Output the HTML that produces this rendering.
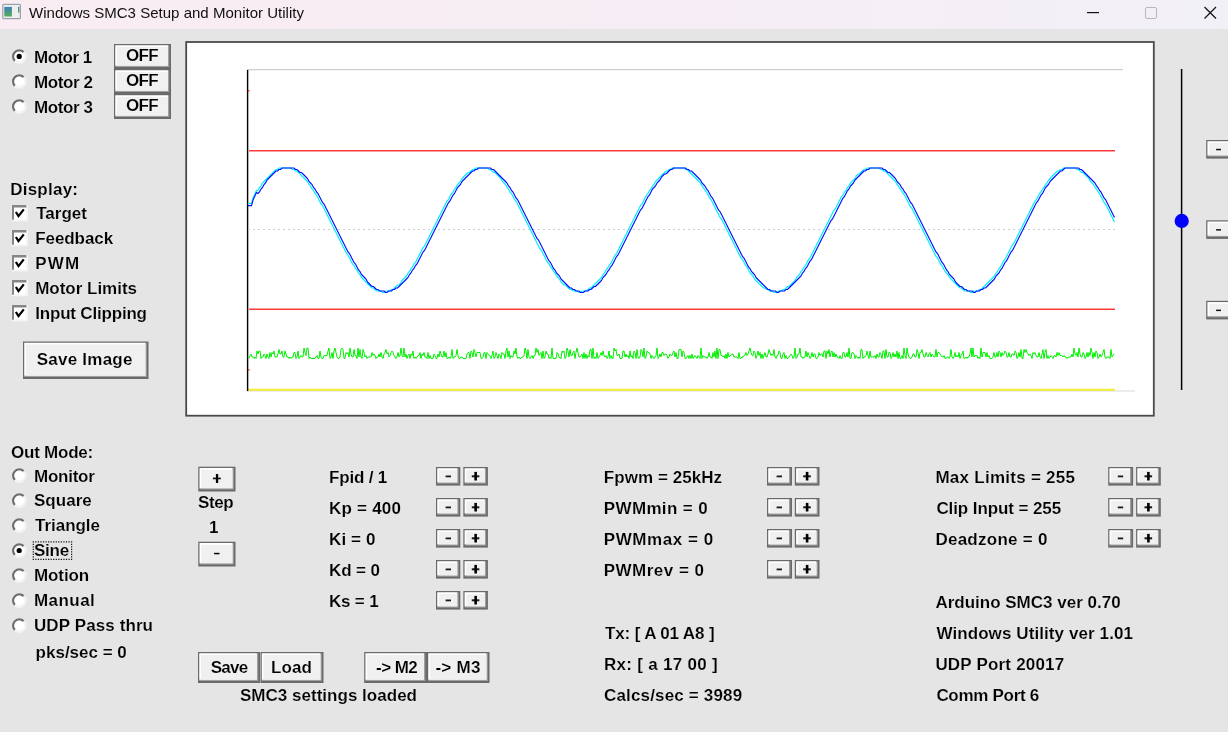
<!DOCTYPE html><html><head><meta charset="utf-8"><style>html,body{margin:0;padding:0;background:#e5e5e5;overflow:hidden}svg{display:block}</style></head><body>
<svg width="1228" height="732" viewBox="0 0 1228 732" font-family="'Liberation Sans', sans-serif">
<rect width="1228" height="732" fill="#e5e5e5"/>
<defs><linearGradient id="tb" x1="0" x2="1" y1="0" y2="0"><stop offset="0" stop-color="#f9edf3"/><stop offset="0.55" stop-color="#f6edf4"/><stop offset="1" stop-color="#f2f0f7"/></linearGradient><filter id="gs" x="0" y="0" width="1228" height="732" filterUnits="userSpaceOnUse"><feColorMatrix type="saturate" values="0"/></filter><linearGradient id="ic" x1="0" x2="0" y1="0" y2="1"><stop offset="0" stop-color="#3f7fb8"/><stop offset="1" stop-color="#4fae5a"/></linearGradient></defs>
<rect x="0" y="0" width="1228" height="29" fill="url(#tb)"/>
<rect x="2.8" y="4.3" width="17.6" height="14.4" rx="1" fill="#eeeeee" stroke="#9aa2ac" stroke-width="1.2"/>
<rect x="4.3" y="6.9" width="7.6" height="9.6" fill="url(#ic)"/>
<rect x="18" y="6.9" width="1.4" height="5.8" fill="url(#ic)"/>
<text x="29" y="18" font-size="15" fill="#111" textLength="275" lengthAdjust="spacingAndGlyphs" filter="url(#gs)">Windows SMC3 Setup and Monitor Utility</text>
<rect x="1087" y="12" width="12" height="1.2" fill="#111"/>
<rect x="1145.5" y="7.5" width="11" height="11" rx="1.5" fill="none" stroke="#b8b8b8" stroke-width="1"/>
<path d="M1204.5 7 L1216 18.5 M1216 7 L1204.5 18.5" stroke="#111" stroke-width="1.2"/>
<rect x="186.2" y="42.0" width="967.6" height="373.7" fill="#ffffff" stroke="#4a4a4a" stroke-width="1.8"/>
<line x1="247" y1="69.7" x2="1123" y2="69.7" stroke="#c4c4c4" stroke-width="1"/>
<line x1="247" y1="391" x2="1135" y2="391" stroke="#d8d8d8" stroke-width="1"/>
<line x1="248" y1="389.8" x2="1115" y2="389.8" stroke="#f4ee30" stroke-width="2"/>
<line x1="247.6" y1="70" x2="247.6" y2="391" stroke="#000" stroke-width="1.4"/>
<line x1="249" y1="150.7" x2="1115" y2="150.7" stroke="#ff3a3a" stroke-width="1.6"/>
<line x1="249" y1="309.2" x2="1115" y2="309.2" stroke="#ff3a3a" stroke-width="1.6"/>
<rect x="248" y="90" width="1.6" height="1.6" fill="#ff3a3a"/>
<rect x="248" y="369" width="1.6" height="1.6" fill="#ff3a3a"/>
<line x1="248" y1="229.5" x2="1115" y2="229.5" stroke="#cfcfcf" stroke-width="1" stroke-dasharray="2,3"/>
<polyline points="248.00,203.43 251.50,203.43 253.00,197.93 256.50,190.43 258.00,190.50 259.50,187.50 261.00,186.00 262.50,183.00 264.00,181.50 265.50,180.00 267.00,178.50 268.50,177.00 270.00,175.50 271.50,174.00 273.00,172.50 274.50,171.00 276.00,169.50 277.50,169.50 279.00,168.00 280.50,168.00 282.00,168.00 283.50,168.00 285.00,168.00 286.50,168.00 288.00,168.00 289.50,168.00 291.00,168.00 292.50,169.50 294.00,169.50 295.50,171.00 297.00,171.00 298.50,172.50 300.00,174.00 301.50,175.50 303.00,177.00 304.50,178.50 306.00,180.00 307.50,181.50 309.00,184.50 310.50,186.00 312.00,189.00 313.50,190.50 315.00,193.50 316.50,195.00 318.00,198.00 319.50,201.00 321.00,204.00 322.50,205.50 324.00,208.50 325.50,211.50 327.00,214.50 328.50,217.50 330.00,220.50 331.50,223.50 333.00,226.50 334.50,229.50 336.00,232.50 337.50,235.50 339.00,238.50 340.50,241.50 342.00,244.50 343.50,247.50 345.00,250.50 346.50,253.50 348.00,255.00 349.50,258.00 351.00,261.00 352.50,264.00 354.00,265.50 355.50,268.50 357.00,270.00 358.50,273.00 360.00,274.50 361.50,277.50 363.00,279.00 364.50,280.50 366.00,282.00 367.50,283.50 369.00,285.00 370.50,286.50 372.00,288.00 373.50,288.00 375.00,289.50 376.50,291.00 378.00,291.00 379.50,291.00 381.00,291.00 382.50,292.50 384.00,292.50 385.50,291.00 387.00,291.00 388.50,291.00 390.00,291.00 391.50,289.50 393.00,289.50 394.50,288.00 396.00,286.50 397.50,285.00 399.00,285.00 400.50,283.50 402.00,280.50 403.50,279.00 405.00,277.50 406.50,276.00 408.00,273.00 409.50,271.50 411.00,268.50 412.50,267.00 414.00,264.00 415.50,262.50 417.00,259.50 418.50,256.50 420.00,253.50 421.50,250.50 423.00,247.50 424.50,246.00 426.00,243.00 427.50,240.00 429.00,237.00 430.50,234.00 432.00,231.00 433.50,228.00 435.00,225.00 436.50,222.00 438.00,219.00 439.50,216.00 441.00,213.00 442.50,210.00 444.00,207.00 445.50,204.00 447.00,201.00 448.50,199.50 450.00,196.50 451.50,193.50 453.00,192.00 454.50,189.00 456.00,187.50 457.50,184.50 459.00,183.00 460.50,181.50 462.00,178.50 463.50,177.00 465.00,175.50 466.50,174.00 468.00,172.50 469.50,172.50 471.00,171.00 472.50,169.50 474.00,169.50 475.50,168.00 477.00,168.00 478.50,168.00 480.00,168.00 481.50,168.00 483.00,168.00 484.50,168.00 486.00,168.00 487.50,168.00 489.00,169.50 490.50,169.50 492.00,171.00 493.50,172.50 495.00,172.50 496.50,174.00 498.00,175.50 499.50,177.00 501.00,178.50 502.50,181.50 504.00,183.00 505.50,184.50 507.00,187.50 508.50,189.00 510.00,192.00 511.50,193.50 513.00,196.50 514.50,199.50 516.00,201.00 517.50,204.00 519.00,207.00 520.50,210.00 522.00,213.00 523.50,216.00 525.00,219.00 526.50,222.00 528.00,225.00 529.50,228.00 531.00,231.00 532.50,234.00 534.00,237.00 535.50,240.00 537.00,243.00 538.50,246.00 540.00,249.00 541.50,250.50 543.00,253.50 544.50,256.50 546.00,259.50 547.50,262.50 549.00,264.00 550.50,267.00 552.00,268.50 553.50,271.50 555.00,273.00 556.50,276.00 558.00,277.50 559.50,279.00 561.00,282.00 562.50,283.50 564.00,285.00 565.50,285.00 567.00,286.50 568.50,288.00 570.00,289.50 571.50,289.50 573.00,291.00 574.50,291.00 576.00,291.00 577.50,291.00 579.00,292.50 580.50,292.50 582.00,291.00 583.50,291.00 585.00,291.00 586.50,291.00 588.00,289.50 589.50,288.00 591.00,288.00 592.50,286.50 594.00,285.00 595.50,283.50 597.00,282.00 598.50,280.50 600.00,279.00 601.50,277.50 603.00,274.50 604.50,273.00 606.00,270.00 607.50,268.50 609.00,265.50 610.50,264.00 612.00,261.00 613.50,258.00 615.00,255.00 616.50,253.50 618.00,250.50 619.50,247.50 621.00,244.50 622.50,241.50 624.00,238.50 625.50,235.50 627.00,232.50 628.50,229.50 630.00,226.50 631.50,223.50 633.00,220.50 634.50,217.50 636.00,214.50 637.50,211.50 639.00,208.50 640.50,205.50 642.00,204.00 643.50,201.00 645.00,198.00 646.50,195.00 648.00,193.50 649.50,190.50 651.00,189.00 652.50,186.00 654.00,184.50 655.50,181.50 657.00,180.00 658.50,178.50 660.00,177.00 661.50,175.50 663.00,174.00 664.50,172.50 666.00,171.00 667.50,171.00 669.00,169.50 670.50,169.50 672.00,168.00 673.50,168.00 675.00,168.00 676.50,168.00 678.00,168.00 679.50,168.00 681.00,168.00 682.50,168.00 684.00,168.00 685.50,169.50 687.00,169.50 688.50,171.00 690.00,172.50 691.50,174.00 693.00,175.50 694.50,177.00 696.00,178.50 697.50,180.00 699.00,181.50 700.50,183.00 702.00,186.00 703.50,187.50 705.00,190.50 706.50,192.00 708.00,195.00 709.50,198.00 711.00,199.50 712.50,202.50 714.00,205.50 715.50,208.50 717.00,211.50 718.50,214.50 720.00,217.50 721.50,219.00 723.00,222.00 724.50,225.00 726.00,228.00 727.50,231.00 729.00,234.00 730.50,237.00 732.00,240.00 733.50,243.00 735.00,246.00 736.50,249.00 738.00,252.00 739.50,255.00 741.00,258.00 742.50,259.50 744.00,262.50 745.50,265.50 747.00,267.00 748.50,270.00 750.00,273.00 751.50,274.50 753.00,276.00 754.50,279.00 756.00,280.50 757.50,282.00 759.00,283.50 760.50,285.00 762.00,286.50 763.50,288.00 765.00,288.00 766.50,289.50 768.00,289.50 769.50,291.00 771.00,291.00 772.50,291.00 774.00,292.50 775.50,292.50 777.00,292.50 778.50,291.00 780.00,291.00 781.50,291.00 783.00,289.50 784.50,289.50 786.00,288.00 787.50,286.50 789.00,286.50 790.50,285.00 792.00,283.50 793.50,282.00 795.00,280.50 796.50,277.50 798.00,276.00 799.50,274.50 801.00,271.50 802.50,270.00 804.00,267.00 805.50,265.50 807.00,262.50 808.50,259.50 810.00,258.00 811.50,255.00 813.00,252.00 814.50,249.00 816.00,246.00 817.50,243.00 819.00,240.00 820.50,237.00 822.00,234.00 823.50,231.00 825.00,228.00 826.50,225.00 828.00,222.00 829.50,219.00 831.00,216.00 832.50,213.00 834.00,210.00 835.50,208.50 837.00,205.50 838.50,202.50 840.00,199.50 841.50,196.50 843.00,195.00 844.50,192.00 846.00,190.50 847.50,187.50 849.00,186.00 850.50,183.00 852.00,181.50 853.50,180.00 855.00,178.50 856.50,175.50 858.00,174.00 859.50,174.00 861.00,172.50 862.50,171.00 864.00,169.50 865.50,169.50 867.00,168.00 868.50,168.00 870.00,168.00 871.50,168.00 873.00,168.00 874.50,168.00 876.00,168.00 877.50,168.00 879.00,168.00 880.50,169.50 882.00,169.50 883.50,171.00 885.00,171.00 886.50,172.50 888.00,174.00 889.50,175.50 891.00,177.00 892.50,178.50 894.00,180.00 895.50,181.50 897.00,184.50 898.50,186.00 900.00,189.00 901.50,190.50 903.00,193.50 904.50,195.00 906.00,198.00 907.50,201.00 909.00,204.00 910.50,207.00 912.00,208.50 913.50,211.50 915.00,214.50 916.50,217.50 918.00,220.50 919.50,223.50 921.00,226.50 922.50,229.50 924.00,232.50 925.50,235.50 927.00,238.50 928.50,241.50 930.00,244.50 931.50,247.50 933.00,250.50 934.50,253.50 936.00,256.50 937.50,258.00 939.00,261.00 940.50,264.00 942.00,265.50 943.50,268.50 945.00,271.50 946.50,273.00 948.00,274.50 949.50,277.50 951.00,279.00 952.50,280.50 954.00,282.00 955.50,283.50 957.00,285.00 958.50,286.50 960.00,288.00 961.50,288.00 963.00,289.50 964.50,291.00 966.00,291.00 967.50,291.00 969.00,291.00 970.50,292.50 972.00,292.50 973.50,291.00 975.00,291.00 976.50,291.00 978.00,291.00 979.50,289.50 981.00,289.50 982.50,288.00 984.00,286.50 985.50,285.00 987.00,283.50 988.50,282.00 990.00,280.50 991.50,279.00 993.00,277.50 994.50,276.00 996.00,273.00 997.50,271.50 999.00,268.50 1000.50,267.00 1002.00,264.00 1003.50,261.00 1005.00,259.50 1006.50,256.50 1008.00,253.50 1009.50,250.50 1011.00,247.50 1012.50,244.50 1014.00,243.00 1015.50,240.00 1017.00,237.00 1018.50,234.00 1020.00,231.00 1021.50,228.00 1023.00,225.00 1024.50,222.00 1026.00,219.00 1027.50,216.00 1029.00,213.00 1030.50,210.00 1032.00,207.00 1033.50,204.00 1035.00,201.00 1036.50,199.50 1038.00,196.50 1039.50,193.50 1041.00,192.00 1042.50,189.00 1044.00,187.50 1045.50,184.50 1047.00,183.00 1048.50,180.00 1050.00,178.50 1051.50,177.00 1053.00,175.50 1054.50,174.00 1056.00,172.50 1057.50,171.00 1059.00,171.00 1060.50,169.50 1062.00,169.50 1063.50,168.00 1065.00,168.00 1066.50,168.00 1068.00,168.00 1069.50,168.00 1071.00,168.00 1072.50,168.00 1074.00,168.00 1075.50,168.00 1077.00,169.50 1078.50,169.50 1080.00,171.00 1081.50,172.50 1083.00,172.50 1084.50,174.00 1086.00,175.50 1087.50,177.00 1089.00,178.50 1090.50,181.50 1092.00,183.00 1093.50,184.50 1095.00,187.50 1096.50,189.00 1098.00,192.00 1099.50,193.50 1101.00,196.50 1102.50,199.50 1104.00,202.50 1105.50,204.00 1107.00,207.00 1108.50,210.00 1110.00,213.00 1111.50,216.00 1113.00,219.00 1114.50,222.00" fill="none" stroke="#00f0ff" stroke-width="1.2"/>
<polyline points="248.00,205.59 251.50,205.59 253.00,200.09 256.50,192.59 258.00,193.50 259.50,192.00 261.00,189.00 262.50,187.50 264.00,184.50 265.50,183.00 267.00,180.00 268.50,178.50 270.00,177.00 271.50,175.50 273.00,174.00 274.50,172.50 276.00,171.00 277.50,171.00 279.00,169.50 280.50,169.50 282.00,168.00 283.50,168.00 285.00,168.00 286.50,168.00 288.00,168.00 289.50,168.00 291.00,168.00 292.50,168.00 294.00,168.00 295.50,169.50 297.00,169.50 298.50,171.00 300.00,172.50 301.50,172.50 303.00,174.00 304.50,175.50 306.00,177.00 307.50,178.50 309.00,181.50 310.50,183.00 312.00,184.50 313.50,187.50 315.00,189.00 316.50,192.00 318.00,193.50 319.50,196.50 321.00,199.50 322.50,202.50 324.00,204.00 325.50,207.00 327.00,210.00 328.50,213.00 330.00,216.00 331.50,219.00 333.00,222.00 334.50,225.00 336.00,228.00 337.50,231.00 339.00,234.00 340.50,237.00 342.00,240.00 343.50,243.00 345.00,246.00 346.50,249.00 348.00,252.00 349.50,253.50 351.00,256.50 352.50,259.50 354.00,262.50 355.50,264.00 357.00,267.00 358.50,270.00 360.00,271.50 361.50,274.50 363.00,276.00 364.50,277.50 366.00,279.00 367.50,282.00 369.00,283.50 370.50,285.00 372.00,286.50 373.50,286.50 375.00,288.00 376.50,289.50 378.00,289.50 379.50,291.00 381.00,291.00 382.50,291.00 384.00,291.00 385.50,292.50 387.00,292.50 388.50,291.00 390.00,291.00 391.50,291.00 393.00,289.50 394.50,289.50 396.00,288.00 397.50,288.00 399.00,286.50 400.50,285.00 402.00,283.50 403.50,282.00 405.00,280.50 406.50,279.00 408.00,277.50 409.50,274.50 411.00,273.00 412.50,270.00 414.00,268.50 415.50,265.50 417.00,264.00 418.50,261.00 420.00,258.00 421.50,255.00 423.00,252.00 424.50,250.50 426.00,247.50 427.50,244.50 429.00,241.50 430.50,238.50 432.00,235.50 433.50,232.50 435.00,229.50 436.50,226.50 438.00,223.50 439.50,220.50 441.00,217.50 442.50,214.50 444.00,211.50 445.50,208.50 447.00,205.50 448.50,202.50 450.00,201.00 451.50,198.00 453.00,195.00 454.50,193.50 456.00,190.50 457.50,187.50 459.00,186.00 460.50,184.50 462.00,181.50 463.50,180.00 465.00,178.50 466.50,177.00 468.00,175.50 469.50,174.00 471.00,172.50 472.50,171.00 474.00,171.00 475.50,169.50 477.00,169.50 478.50,168.00 480.00,168.00 481.50,168.00 483.00,168.00 484.50,168.00 486.00,168.00 487.50,168.00 489.00,168.00 490.50,168.00 492.00,169.50 493.50,169.50 495.00,171.00 496.50,172.50 498.00,174.00 499.50,175.50 501.00,177.00 502.50,178.50 504.00,180.00 505.50,181.50 507.00,183.00 508.50,186.00 510.00,187.50 511.50,190.50 513.00,192.00 514.50,195.00 516.00,198.00 517.50,199.50 519.00,202.50 520.50,205.50 522.00,208.50 523.50,211.50 525.00,214.50 526.50,217.50 528.00,220.50 529.50,223.50 531.00,226.50 532.50,229.50 534.00,232.50 535.50,235.50 537.00,238.50 538.50,240.00 540.00,243.00 541.50,246.00 543.00,249.00 544.50,252.00 546.00,255.00 547.50,258.00 549.00,261.00 550.50,262.50 552.00,265.50 553.50,268.50 555.00,270.00 556.50,273.00 558.00,274.50 559.50,276.00 561.00,279.00 562.50,280.50 564.00,282.00 565.50,283.50 567.00,285.00 568.50,286.50 570.00,288.00 571.50,288.00 573.00,289.50 574.50,289.50 576.00,291.00 577.50,291.00 579.00,291.00 580.50,292.50 582.00,292.50 583.50,292.50 585.00,291.00 586.50,291.00 588.00,291.00 589.50,289.50 591.00,289.50 592.50,288.00 594.00,286.50 595.50,286.50 597.00,285.00 598.50,283.50 600.00,282.00 601.50,280.50 603.00,277.50 604.50,276.00 606.00,274.50 607.50,271.50 609.00,270.00 610.50,267.00 612.00,265.50 613.50,262.50 615.00,259.50 616.50,256.50 618.00,255.00 619.50,252.00 621.00,249.00 622.50,246.00 624.00,243.00 625.50,240.00 627.00,237.00 628.50,234.00 630.00,231.00 631.50,228.00 633.00,225.00 634.50,222.00 636.00,219.00 637.50,216.00 639.00,213.00 640.50,210.00 642.00,208.50 643.50,205.50 645.00,202.50 646.50,199.50 648.00,196.50 649.50,195.00 651.00,192.00 652.50,189.00 654.00,187.50 655.50,186.00 657.00,183.00 658.50,181.50 660.00,180.00 661.50,177.00 663.00,175.50 664.50,174.00 666.00,174.00 667.50,172.50 669.00,171.00 670.50,169.50 672.00,169.50 673.50,168.00 675.00,168.00 676.50,168.00 678.00,168.00 679.50,168.00 681.00,168.00 682.50,168.00 684.00,168.00 685.50,168.00 687.00,169.50 688.50,169.50 690.00,171.00 691.50,171.00 693.00,172.50 694.50,174.00 696.00,175.50 697.50,177.00 699.00,178.50 700.50,180.00 702.00,183.00 703.50,184.50 705.00,186.00 706.50,189.00 708.00,190.50 709.50,193.50 711.00,196.50 712.50,198.00 714.00,201.00 715.50,204.00 717.00,207.00 718.50,210.00 720.00,211.50 721.50,214.50 723.00,217.50 724.50,220.50 726.00,223.50 727.50,226.50 729.00,229.50 730.50,232.50 732.00,235.50 733.50,238.50 735.00,241.50 736.50,244.50 738.00,247.50 739.50,250.50 741.00,253.50 742.50,256.50 744.00,258.00 745.50,261.00 747.00,264.00 748.50,267.00 750.00,268.50 751.50,271.50 753.00,273.00 754.50,274.50 756.00,277.50 757.50,279.00 759.00,280.50 760.50,282.00 762.00,283.50 763.50,285.00 765.00,286.50 766.50,288.00 768.00,289.50 769.50,289.50 771.00,291.00 772.50,291.00 774.00,291.00 775.50,291.00 777.00,292.50 778.50,292.50 780.00,291.00 781.50,291.00 783.00,291.00 784.50,291.00 786.00,289.50 787.50,289.50 789.00,288.00 790.50,286.50 792.00,285.00 793.50,283.50 795.00,282.00 796.50,280.50 798.00,279.00 799.50,277.50 801.00,276.00 802.50,273.00 804.00,271.50 805.50,268.50 807.00,267.00 808.50,264.00 810.00,261.00 811.50,259.50 813.00,256.50 814.50,253.50 816.00,250.50 817.50,247.50 819.00,244.50 820.50,241.50 822.00,238.50 823.50,235.50 825.00,232.50 826.50,229.50 828.00,226.50 829.50,223.50 831.00,220.50 832.50,219.00 834.00,216.00 835.50,213.00 837.00,210.00 838.50,207.00 840.00,204.00 841.50,201.00 843.00,198.00 844.50,196.50 846.00,193.50 847.50,190.50 849.00,189.00 850.50,186.00 852.00,184.50 853.50,183.00 855.00,180.00 856.50,178.50 858.00,177.00 859.50,175.50 861.00,174.00 862.50,172.50 864.00,171.00 865.50,171.00 867.00,169.50 868.50,169.50 870.00,168.00 871.50,168.00 873.00,168.00 874.50,168.00 876.00,168.00 877.50,168.00 879.00,168.00 880.50,168.00 882.00,168.00 883.50,169.50 885.00,169.50 886.50,171.00 888.00,172.50 889.50,172.50 891.00,174.00 892.50,175.50 894.00,177.00 895.50,178.50 897.00,181.50 898.50,183.00 900.00,184.50 901.50,187.50 903.00,189.00 904.50,192.00 906.00,193.50 907.50,196.50 909.00,199.50 910.50,202.50 912.00,204.00 913.50,207.00 915.00,210.00 916.50,213.00 918.00,216.00 919.50,219.00 921.00,222.00 922.50,225.00 924.00,228.00 925.50,231.00 927.00,234.00 928.50,237.00 930.00,240.00 931.50,243.00 933.00,246.00 934.50,249.00 936.00,252.00 937.50,253.50 939.00,256.50 940.50,259.50 942.00,262.50 943.50,264.00 945.00,267.00 946.50,270.00 948.00,271.50 949.50,274.50 951.00,276.00 952.50,277.50 954.00,279.00 955.50,282.00 957.00,283.50 958.50,285.00 960.00,286.50 961.50,286.50 963.00,288.00 964.50,289.50 966.00,289.50 967.50,291.00 969.00,291.00 970.50,291.00 972.00,291.00 973.50,292.50 975.00,292.50 976.50,291.00 978.00,291.00 979.50,291.00 981.00,289.50 982.50,289.50 984.00,288.00 985.50,288.00 987.00,286.50 988.50,285.00 990.00,283.50 991.50,282.00 993.00,280.50 994.50,279.00 996.00,276.00 997.50,274.50 999.00,273.00 1000.50,270.00 1002.00,268.50 1003.50,265.50 1005.00,262.50 1006.50,261.00 1008.00,258.00 1009.50,255.00 1011.00,252.00 1012.50,250.50 1014.00,247.50 1015.50,244.50 1017.00,241.50 1018.50,238.50 1020.00,235.50 1021.50,232.50 1023.00,229.50 1024.50,226.50 1026.00,223.50 1027.50,220.50 1029.00,217.50 1030.50,214.50 1032.00,211.50 1033.50,208.50 1035.00,205.50 1036.50,202.50 1038.00,201.00 1039.50,198.00 1041.00,195.00 1042.50,193.50 1044.00,190.50 1045.50,187.50 1047.00,186.00 1048.50,184.50 1050.00,181.50 1051.50,180.00 1053.00,178.50 1054.50,177.00 1056.00,175.50 1057.50,174.00 1059.00,172.50 1060.50,171.00 1062.00,171.00 1063.50,169.50 1065.00,168.00 1066.50,168.00 1068.00,168.00 1069.50,168.00 1071.00,168.00 1072.50,168.00 1074.00,168.00 1075.50,168.00 1077.00,168.00 1078.50,168.00 1080.00,169.50 1081.50,169.50 1083.00,171.00 1084.50,172.50 1086.00,174.00 1087.50,175.50 1089.00,177.00 1090.50,178.50 1092.00,180.00 1093.50,181.50 1095.00,183.00 1096.50,186.00 1098.00,187.50 1099.50,190.50 1101.00,192.00 1102.50,195.00 1104.00,198.00 1105.50,199.50 1107.00,202.50 1108.50,205.50 1110.00,208.50 1111.50,211.50 1113.00,214.50 1114.50,217.50" fill="none" stroke="#0010ff" stroke-width="1.15"/>
<polyline points="249.0,358.5 250.0,355.5 251.0,354.0 252.0,357.0 253.0,357.0 254.0,358.5 255.0,357.0 256.0,358.5 257.0,351.0 258.0,354.0 259.0,351.0 260.0,351.0 261.0,358.5 262.0,357.0 263.0,357.0 264.0,354.0 265.0,355.5 266.0,358.5 267.0,354.0 268.0,357.0 269.0,358.5 270.0,352.5 271.0,357.0 272.0,352.5 273.0,354.0 274.0,351.0 275.0,357.0 276.0,357.0 277.0,357.0 278.0,354.0 279.0,349.5 280.0,354.0 281.0,354.0 282.0,351.0 283.0,357.0 284.0,357.0 285.0,351.0 286.0,354.0 287.0,357.0 288.0,357.0 289.0,358.5 290.0,357.0 291.0,358.5 292.0,357.0 293.0,357.0 294.0,352.5 295.0,352.5 296.0,358.5 297.0,357.0 298.0,351.0 299.0,358.5 300.0,357.0 301.0,355.5 302.0,357.0 303.0,357.0 304.0,348.0 305.0,352.5 306.0,355.5 307.0,348.0 308.0,348.0 309.0,358.5 310.0,357.0 311.0,358.5 312.0,358.5 313.0,358.5 314.0,358.5 315.0,358.5 316.0,357.0 317.0,355.5 318.0,358.5 319.0,358.5 320.0,351.0 321.0,357.0 322.0,358.5 323.0,358.5 324.0,355.5 325.0,355.5 326.0,355.5 327.0,355.5 328.0,351.0 329.0,348.0 330.0,358.5 331.0,357.0 332.0,352.5 333.0,358.5 334.0,351.0 335.0,348.0 336.0,352.5 337.0,357.0 338.0,358.5 339.0,358.5 340.0,357.0 341.0,349.5 342.0,348.0 343.0,349.5 344.0,358.5 345.0,358.5 346.0,352.5 347.0,354.0 348.0,352.5 349.0,357.0 350.0,348.0 351.0,354.0 352.0,357.0 353.0,357.0 354.0,349.5 355.0,355.5 356.0,355.5 357.0,358.5 358.0,348.0 359.0,357.0 360.0,349.5 361.0,357.0 362.0,358.5 363.0,349.5 364.0,352.5 365.0,357.0 366.0,355.5 367.0,358.5 368.0,357.0 369.0,357.0 370.0,357.0 371.0,357.0 372.0,352.5 373.0,355.5 374.0,354.0 375.0,355.5 376.0,358.5 377.0,357.0 378.0,357.0 379.0,354.0 380.0,357.0 381.0,352.5 382.0,357.0 383.0,358.5 384.0,354.0 385.0,352.5 386.0,349.5 387.0,354.0 388.0,352.5 389.0,357.0 390.0,355.5 391.0,352.5 392.0,351.0 393.0,352.5 394.0,355.5 395.0,357.0 396.0,358.5 397.0,357.0 398.0,352.5 399.0,357.0 400.0,355.5 401.0,348.0 402.0,355.5 403.0,357.0 404.0,348.0 405.0,357.0 406.0,354.0 407.0,358.5 408.0,355.5 409.0,354.0 410.0,358.5 411.0,354.0 412.0,355.5 413.0,351.0 414.0,358.5 415.0,357.0 416.0,358.5 417.0,357.0 418.0,355.5 419.0,355.5 420.0,352.5 421.0,358.5 422.0,354.0 423.0,355.5 424.0,352.5 425.0,357.0 426.0,357.0 427.0,358.5 428.0,352.5 429.0,358.5 430.0,355.5 431.0,358.5 432.0,358.5 433.0,358.5 434.0,354.0 435.0,355.5 436.0,358.5 437.0,358.5 438.0,354.0 439.0,357.0 440.0,351.0 441.0,354.0 442.0,357.0 443.0,357.0 444.0,351.0 445.0,357.0 446.0,352.5 447.0,358.5 448.0,358.5 449.0,357.0 450.0,358.5 451.0,357.0 452.0,349.5 453.0,358.5 454.0,357.0 455.0,357.0 456.0,355.5 457.0,349.5 458.0,355.5 459.0,358.5 460.0,358.5 461.0,357.0 462.0,357.0 463.0,358.5 464.0,358.5 465.0,358.5 466.0,358.5 467.0,354.0 468.0,352.5 469.0,352.5 470.0,358.5 471.0,351.0 472.0,352.5 473.0,357.0 474.0,349.5 475.0,352.5 476.0,357.0 477.0,352.5 478.0,352.5 479.0,352.5 480.0,352.5 481.0,358.5 482.0,358.5 483.0,357.0 484.0,352.5 485.0,352.5 486.0,358.5 487.0,352.5 488.0,354.0 489.0,355.5 490.0,355.5 491.0,358.5 492.0,355.5 493.0,351.0 494.0,358.5 495.0,357.0 496.0,352.5 497.0,355.5 498.0,358.5 499.0,354.0 500.0,355.5 501.0,358.5 502.0,352.5 503.0,354.0 504.0,354.0 505.0,358.5 506.0,351.0 507.0,348.0 508.0,357.0 509.0,351.0 510.0,358.5 511.0,355.5 512.0,357.0 513.0,357.0 514.0,351.0 515.0,354.0 516.0,348.0 517.0,357.0 518.0,358.5 519.0,357.0 520.0,358.5 521.0,358.5 522.0,357.0 523.0,357.0 524.0,355.5 525.0,348.0 526.0,351.0 527.0,358.5 528.0,349.5 529.0,357.0 530.0,358.5 531.0,357.0 532.0,355.5 533.0,358.5 534.0,355.5 535.0,355.5 536.0,348.0 537.0,352.5 538.0,349.5 539.0,355.5 540.0,354.0 541.0,352.5 542.0,358.5 543.0,351.0 544.0,358.5 545.0,357.0 546.0,351.0 547.0,354.0 548.0,354.0 549.0,358.5 550.0,357.0 551.0,358.5 552.0,348.0 553.0,358.5 554.0,358.5 555.0,358.5 556.0,358.5 557.0,352.5 558.0,354.0 559.0,357.0 560.0,358.5 561.0,358.5 562.0,351.0 563.0,352.5 564.0,351.0 565.0,358.5 566.0,357.0 567.0,348.0 568.0,351.0 569.0,357.0 570.0,349.5 571.0,355.5 572.0,355.5 573.0,352.5 574.0,351.0 575.0,358.5 576.0,352.5 577.0,348.0 578.0,352.5 579.0,357.0 580.0,357.0 581.0,355.5 582.0,354.0 583.0,358.5 584.0,352.5 585.0,358.5 586.0,354.0 587.0,358.5 588.0,355.5 589.0,357.0 590.0,349.5 591.0,349.5 592.0,358.5 593.0,348.0 594.0,358.5 595.0,357.0 596.0,358.5 597.0,352.5 598.0,358.5 599.0,357.0 600.0,355.5 601.0,352.5 602.0,355.5 603.0,351.0 604.0,355.5 605.0,357.0 606.0,355.5 607.0,358.5 608.0,357.0 609.0,351.0 610.0,358.5 611.0,355.5 612.0,358.5 613.0,358.5 614.0,348.0 615.0,351.0 616.0,349.5 617.0,355.5 618.0,355.5 619.0,354.0 620.0,358.5 621.0,358.5 622.0,358.5 623.0,351.0 624.0,351.0 625.0,357.0 626.0,354.0 627.0,357.0 628.0,355.5 629.0,358.5 630.0,351.0 631.0,357.0 632.0,355.5 633.0,358.5 634.0,351.0 635.0,352.5 636.0,358.5 637.0,349.5 638.0,357.0 639.0,358.5 640.0,357.0 641.0,349.5 642.0,351.0 643.0,357.0 644.0,348.0 645.0,358.5 646.0,357.0 647.0,351.0 648.0,352.5 649.0,352.5 650.0,354.0 651.0,358.5 652.0,355.5 653.0,357.0 654.0,358.5 655.0,357.0 656.0,355.5 657.0,348.0 658.0,358.5 659.0,357.0 660.0,354.0 661.0,357.0 662.0,352.5 663.0,352.5 664.0,355.5 665.0,354.0 666.0,354.0 667.0,355.5 668.0,358.5 669.0,357.0 670.0,354.0 671.0,355.5 672.0,355.5 673.0,352.5 674.0,351.0 675.0,357.0 676.0,352.5 677.0,358.5 678.0,358.5 679.0,349.5 680.0,349.5 681.0,349.5 682.0,357.0 683.0,351.0 684.0,352.5 685.0,358.5 686.0,358.5 687.0,357.0 688.0,355.5 689.0,358.5 690.0,355.5 691.0,358.5 692.0,354.0 693.0,358.5 694.0,357.0 695.0,355.5 696.0,357.0 697.0,358.5 698.0,355.5 699.0,357.0 700.0,358.5 701.0,348.0 702.0,358.5 703.0,355.5 704.0,357.0 705.0,357.0 706.0,357.0 707.0,358.5 708.0,357.0 709.0,352.5 710.0,357.0 711.0,357.0 712.0,358.5 713.0,352.5 714.0,357.0 715.0,351.0 716.0,358.5 717.0,348.0 718.0,358.5 719.0,349.5 720.0,349.5 721.0,355.5 722.0,355.5 723.0,357.0 724.0,355.5 725.0,358.5 726.0,354.0 727.0,358.5 728.0,352.5 729.0,357.0 730.0,355.5 731.0,355.5 732.0,354.0 733.0,354.0 734.0,357.0 735.0,357.0 736.0,357.0 737.0,357.0 738.0,358.5 739.0,352.5 740.0,358.5 741.0,358.5 742.0,357.0 743.0,357.0 744.0,355.5 745.0,355.5 746.0,352.5 747.0,355.5 748.0,354.0 749.0,351.0 750.0,348.0 751.0,352.5 752.0,355.5 753.0,355.5 754.0,351.0 755.0,352.5 756.0,358.5 757.0,355.5 758.0,351.0 759.0,355.5 760.0,352.5 761.0,358.5 762.0,354.0 763.0,358.5 764.0,355.5 765.0,352.5 766.0,357.0 767.0,357.0 768.0,354.0 769.0,349.5 770.0,352.5 771.0,355.5 772.0,354.0 773.0,355.5 774.0,349.5 775.0,357.0 776.0,358.5 777.0,355.5 778.0,355.5 779.0,351.0 780.0,352.5 781.0,358.5 782.0,358.5 783.0,354.0 784.0,352.5 785.0,358.5 786.0,355.5 787.0,358.5 788.0,358.5 789.0,357.0 790.0,355.5 791.0,354.0 792.0,355.5 793.0,358.5 794.0,357.0 795.0,348.0 796.0,358.5 797.0,357.0 798.0,354.0 799.0,354.0 800.0,348.0 801.0,357.0 802.0,357.0 803.0,358.5 804.0,357.0 805.0,357.0 806.0,351.0 807.0,357.0 808.0,352.5 809.0,355.5 810.0,358.5 811.0,357.0 812.0,352.5 813.0,357.0 814.0,354.0 815.0,354.0 816.0,358.5 817.0,358.5 818.0,357.0 819.0,352.5 820.0,355.5 821.0,354.0 822.0,354.0 823.0,357.0 824.0,351.0 825.0,351.0 826.0,358.5 827.0,351.0 828.0,354.0 829.0,349.5 830.0,357.0 831.0,352.5 832.0,351.0 833.0,357.0 834.0,352.5 835.0,357.0 836.0,354.0 837.0,357.0 838.0,357.0 839.0,358.5 840.0,355.5 841.0,358.5 842.0,358.5 843.0,352.5 844.0,352.5 845.0,357.0 846.0,357.0 847.0,352.5 848.0,357.0 849.0,348.0 850.0,358.5 851.0,358.5 852.0,352.5 853.0,352.5 854.0,354.0 855.0,358.5 856.0,355.5 857.0,357.0 858.0,358.5 859.0,357.0 860.0,358.5 861.0,349.5 862.0,349.5 863.0,358.5 864.0,357.0 865.0,357.0 866.0,355.5 867.0,351.0 868.0,355.5 869.0,358.5 870.0,351.0 871.0,357.0 872.0,357.0 873.0,357.0 874.0,357.0 875.0,355.5 876.0,358.5 877.0,354.0 878.0,357.0 879.0,357.0 880.0,352.5 881.0,354.0 882.0,358.5 883.0,351.0 884.0,351.0 885.0,358.5 886.0,349.5 887.0,357.0 888.0,357.0 889.0,352.5 890.0,352.5 891.0,358.5 892.0,357.0 893.0,352.5 894.0,357.0 895.0,354.0 896.0,357.0 897.0,351.0 898.0,358.5 899.0,352.5 900.0,358.5 901.0,358.5 902.0,355.5 903.0,358.5 904.0,348.0 905.0,355.5 906.0,358.5 907.0,348.0 908.0,354.0 909.0,357.0 910.0,358.5 911.0,358.5 912.0,357.0 913.0,354.0 914.0,354.0 915.0,357.0 916.0,357.0 917.0,349.5 918.0,352.5 919.0,358.5 920.0,352.5 921.0,352.5 922.0,349.5 923.0,354.0 924.0,357.0 925.0,357.0 926.0,352.5 927.0,355.5 928.0,357.0 929.0,354.0 930.0,352.5 931.0,357.0 932.0,354.0 933.0,355.5 934.0,357.0 935.0,357.0 936.0,349.5 937.0,357.0 938.0,352.5 939.0,352.5 940.0,354.0 941.0,355.5 942.0,357.0 943.0,357.0 944.0,355.5 945.0,358.5 946.0,358.5 947.0,357.0 948.0,357.0 949.0,358.5 950.0,357.0 951.0,349.5 952.0,357.0 953.0,358.5 954.0,357.0 955.0,352.5 956.0,357.0 957.0,355.5 958.0,357.0 959.0,352.5 960.0,358.5 961.0,355.5 962.0,354.0 963.0,351.0 964.0,358.5 965.0,358.5 966.0,357.0 967.0,358.5 968.0,357.0 969.0,357.0 970.0,354.0 971.0,348.0 972.0,357.0 973.0,348.0 974.0,357.0 975.0,355.5 976.0,355.5 977.0,355.5 978.0,358.5 979.0,357.0 980.0,358.5 981.0,348.0 982.0,357.0 983.0,352.5 984.0,352.5 985.0,352.5 986.0,357.0 987.0,352.5 988.0,357.0 989.0,355.5 990.0,358.5 991.0,358.5 992.0,358.5 993.0,357.0 994.0,352.5 995.0,357.0 996.0,357.0 997.0,352.5 998.0,357.0 999.0,351.0 1000.0,352.5 1001.0,357.0 1002.0,352.5 1003.0,355.5 1004.0,354.0 1005.0,351.0 1006.0,352.5 1007.0,357.0 1008.0,357.0 1009.0,352.5 1010.0,357.0 1011.0,357.0 1012.0,354.0 1013.0,354.0 1014.0,355.5 1015.0,351.0 1016.0,352.5 1017.0,358.5 1018.0,357.0 1019.0,352.5 1020.0,357.0 1021.0,349.5 1022.0,358.5 1023.0,358.5 1024.0,349.5 1025.0,352.5 1026.0,349.5 1027.0,352.5 1028.0,354.0 1029.0,355.5 1030.0,354.0 1031.0,355.5 1032.0,358.5 1033.0,352.5 1034.0,354.0 1035.0,352.5 1036.0,355.5 1037.0,357.0 1038.0,357.0 1039.0,352.5 1040.0,357.0 1041.0,358.5 1042.0,354.0 1043.0,349.5 1044.0,358.5 1045.0,352.5 1046.0,349.5 1047.0,358.5 1048.0,355.5 1049.0,358.5 1050.0,357.0 1051.0,355.5 1052.0,357.0 1053.0,358.5 1054.0,355.5 1055.0,355.5 1056.0,357.0 1057.0,352.5 1058.0,355.5 1059.0,352.5 1060.0,355.5 1061.0,355.5 1062.0,355.5 1063.0,357.0 1064.0,355.5 1065.0,357.0 1066.0,357.0 1067.0,358.5 1068.0,357.0 1069.0,357.0 1070.0,357.0 1071.0,357.0 1072.0,354.0 1073.0,357.0 1074.0,348.0 1075.0,354.0 1076.0,355.5 1077.0,352.5 1078.0,357.0 1079.0,348.0 1080.0,354.0 1081.0,357.0 1082.0,357.0 1083.0,352.5 1084.0,354.0 1085.0,358.5 1086.0,357.0 1087.0,352.5 1088.0,357.0 1089.0,352.5 1090.0,355.5 1091.0,348.0 1092.0,352.5 1093.0,358.5 1094.0,352.5 1095.0,357.0 1096.0,351.0 1097.0,352.5 1098.0,358.5 1099.0,357.0 1100.0,354.0 1101.0,357.0 1102.0,355.5 1103.0,352.5 1104.0,349.5 1105.0,357.0 1106.0,358.5 1107.0,357.0 1108.0,357.0 1109.0,357.0 1110.0,358.5 1111.0,349.5 1112.0,357.0 1113.0,355.5 1114.0,354.0" fill="none" stroke="#00f000" stroke-width="1.0"/>
<line x1="1181.6" y1="69" x2="1181.6" y2="390" stroke="#000" stroke-width="1.5"/>
<circle cx="1181.7" cy="220.9" r="7.1" fill="#0000ff"/>
<rect x="1206.2" y="140" width="33.799999999999955" height="18.599999999999994" fill="#6a6a6a"/>
<rect x="1207.5" y="141.3" width="30.799999999999958" height="15.299999999999994" fill="#a0a0a0"/>
<rect x="1207.5" y="141.3" width="29.399999999999956" height="13.999999999999993" fill="#ffffff"/>
<rect x="1209.2" y="143" width="27.699999999999953" height="12.299999999999994" fill="#f0f0f0"/>
<rect x="1216.1" y="148.8" width="4.9" height="1.5" fill="#111"/>
<rect x="1206.2" y="220.3" width="33.799999999999955" height="18.599999999999994" fill="#6a6a6a"/>
<rect x="1207.5" y="221.60000000000002" width="30.799999999999958" height="15.299999999999994" fill="#a0a0a0"/>
<rect x="1207.5" y="221.60000000000002" width="29.399999999999956" height="13.999999999999993" fill="#ffffff"/>
<rect x="1209.2" y="223.3" width="27.699999999999953" height="12.299999999999994" fill="#f0f0f0"/>
<rect x="1216.1" y="229.10000000000002" width="4.9" height="1.5" fill="#111"/>
<rect x="1206.2" y="300.8" width="33.799999999999955" height="18.600000000000023" fill="#6a6a6a"/>
<rect x="1207.5" y="302.1" width="30.799999999999958" height="15.300000000000022" fill="#a0a0a0"/>
<rect x="1207.5" y="302.1" width="29.399999999999956" height="14.000000000000021" fill="#ffffff"/>
<rect x="1209.2" y="303.8" width="27.699999999999953" height="12.300000000000022" fill="#f0f0f0"/>
<rect x="1216.1" y="309.6" width="4.9" height="1.5" fill="#111"/>
<rect x="114" y="44" width="57" height="25" fill="#6a6a6a"/>
<rect x="115.3" y="45.3" width="54.0" height="21.7" fill="#a0a0a0"/>
<rect x="115.3" y="45.3" width="52.6" height="20.4" fill="#ffffff"/>
<rect x="117" y="47" width="50.9" height="18.7" fill="#f0f0f0"/>
<rect x="114" y="69" width="57" height="25" fill="#6a6a6a"/>
<rect x="115.3" y="70.3" width="54.0" height="21.7" fill="#a0a0a0"/>
<rect x="115.3" y="70.3" width="52.6" height="20.4" fill="#ffffff"/>
<rect x="117" y="72" width="50.9" height="18.7" fill="#f0f0f0"/>
<rect x="114" y="94" width="57" height="25" fill="#6a6a6a"/>
<rect x="115.3" y="95.3" width="54.0" height="21.7" fill="#a0a0a0"/>
<rect x="115.3" y="95.3" width="52.6" height="20.4" fill="#ffffff"/>
<rect x="117" y="97" width="50.9" height="18.7" fill="#f0f0f0"/>
<circle cx="19.2" cy="56.4" r="7.4" fill="#f4f4f4"/>
<path d="M 13.97 61.63 A 7.4 7.4 0 0 1 24.43 51.17 L 22.66 52.94 A 4.9 4.9 0 0 0 15.74 59.86 Z" fill="#6e6e6e"/>
<circle cx="19.2" cy="56.4" r="4.9" fill="#ffffff"/>
<circle cx="19.2" cy="56.4" r="2.6" fill="#000"/>
<circle cx="19.2" cy="81.4" r="7.4" fill="#f4f4f4"/>
<path d="M 13.97 86.63 A 7.4 7.4 0 0 1 24.43 76.17 L 22.66 77.94 A 4.9 4.9 0 0 0 15.74 84.86 Z" fill="#6e6e6e"/>
<circle cx="19.2" cy="81.4" r="4.9" fill="#ffffff"/>
<circle cx="19.2" cy="106.4" r="7.4" fill="#f4f4f4"/>
<path d="M 13.97 111.63 A 7.4 7.4 0 0 1 24.43 101.17 L 22.66 102.94 A 4.9 4.9 0 0 0 15.74 109.86 Z" fill="#6e6e6e"/>
<circle cx="19.2" cy="106.4" r="4.9" fill="#ffffff"/>
<rect x="11.8" y="204.9" width="16.2" height="16.4" fill="#f5f5f5"/>
<rect x="12" y="205" width="14.4" height="2.7" fill="#868686"/>
<rect x="12" y="205" width="2" height="14.7" fill="#868686"/>
<rect x="14" y="207.7" width="11.7" height="11.6" fill="#ffffff"/>
<polyline points="15.9,212.0 18.5,216.1 23.8,209.4" fill="none" stroke="#000" stroke-width="2.3"/>
<rect x="11.8" y="229.9" width="16.2" height="16.4" fill="#f5f5f5"/>
<rect x="12" y="230" width="14.4" height="2.7" fill="#868686"/>
<rect x="12" y="230" width="2" height="14.7" fill="#868686"/>
<rect x="14" y="232.7" width="11.7" height="11.6" fill="#ffffff"/>
<polyline points="15.9,237.0 18.5,241.1 23.8,234.4" fill="none" stroke="#000" stroke-width="2.3"/>
<rect x="11.8" y="254.9" width="16.2" height="16.4" fill="#f5f5f5"/>
<rect x="12" y="255" width="14.4" height="2.7" fill="#868686"/>
<rect x="12" y="255" width="2" height="14.7" fill="#868686"/>
<rect x="14" y="257.7" width="11.7" height="11.6" fill="#ffffff"/>
<polyline points="15.9,262.0 18.5,266.1 23.8,259.4" fill="none" stroke="#000" stroke-width="2.3"/>
<rect x="11.8" y="279.9" width="16.2" height="16.4" fill="#f5f5f5"/>
<rect x="12" y="280" width="14.4" height="2.7" fill="#868686"/>
<rect x="12" y="280" width="2" height="14.7" fill="#868686"/>
<rect x="14" y="282.7" width="11.7" height="11.6" fill="#ffffff"/>
<polyline points="15.9,287.0 18.5,291.1 23.8,284.4" fill="none" stroke="#000" stroke-width="2.3"/>
<rect x="11.8" y="304.9" width="16.2" height="16.4" fill="#f5f5f5"/>
<rect x="12" y="305" width="14.4" height="2.7" fill="#868686"/>
<rect x="12" y="305" width="2" height="14.7" fill="#868686"/>
<rect x="14" y="307.7" width="11.7" height="11.6" fill="#ffffff"/>
<polyline points="15.9,312.0 18.5,316.1 23.8,309.4" fill="none" stroke="#000" stroke-width="2.3"/>
<rect x="23" y="341.5" width="125.5" height="37.5" fill="#6a6a6a"/>
<rect x="24.3" y="342.8" width="122.5" height="34.2" fill="#a0a0a0"/>
<rect x="24.3" y="342.8" width="121.10000000000001" height="32.900000000000006" fill="#ffffff"/>
<rect x="26" y="344.5" width="119.4" height="31.2" fill="#f0f0f0"/>
<circle cx="19.2" cy="475.5" r="7.4" fill="#f4f4f4"/>
<path d="M 13.97 480.73 A 7.4 7.4 0 0 1 24.43 470.27 L 22.66 472.04 A 4.9 4.9 0 0 0 15.74 478.96 Z" fill="#6e6e6e"/>
<circle cx="19.2" cy="475.5" r="4.9" fill="#ffffff"/>
<circle cx="19.2" cy="500.5" r="7.4" fill="#f4f4f4"/>
<path d="M 13.97 505.73 A 7.4 7.4 0 0 1 24.43 495.27 L 22.66 497.04 A 4.9 4.9 0 0 0 15.74 503.96 Z" fill="#6e6e6e"/>
<circle cx="19.2" cy="500.5" r="4.9" fill="#ffffff"/>
<circle cx="19.2" cy="525.5" r="7.4" fill="#f4f4f4"/>
<path d="M 13.97 530.73 A 7.4 7.4 0 0 1 24.43 520.27 L 22.66 522.04 A 4.9 4.9 0 0 0 15.74 528.96 Z" fill="#6e6e6e"/>
<circle cx="19.2" cy="525.5" r="4.9" fill="#ffffff"/>
<circle cx="19.2" cy="550.5" r="7.4" fill="#f4f4f4"/>
<path d="M 13.97 555.73 A 7.4 7.4 0 0 1 24.43 545.27 L 22.66 547.04 A 4.9 4.9 0 0 0 15.74 553.96 Z" fill="#6e6e6e"/>
<circle cx="19.2" cy="550.5" r="4.9" fill="#ffffff"/>
<circle cx="19.2" cy="550.5" r="2.6" fill="#000"/>
<circle cx="19.2" cy="575.5" r="7.4" fill="#f4f4f4"/>
<path d="M 13.97 580.73 A 7.4 7.4 0 0 1 24.43 570.27 L 22.66 572.04 A 4.9 4.9 0 0 0 15.74 578.96 Z" fill="#6e6e6e"/>
<circle cx="19.2" cy="575.5" r="4.9" fill="#ffffff"/>
<circle cx="19.2" cy="600.5" r="7.4" fill="#f4f4f4"/>
<path d="M 13.97 605.73 A 7.4 7.4 0 0 1 24.43 595.27 L 22.66 597.04 A 4.9 4.9 0 0 0 15.74 603.96 Z" fill="#6e6e6e"/>
<circle cx="19.2" cy="600.5" r="4.9" fill="#ffffff"/>
<circle cx="19.2" cy="625.5" r="7.4" fill="#f4f4f4"/>
<path d="M 13.97 630.73 A 7.4 7.4 0 0 1 24.43 620.27 L 22.66 622.04 A 4.9 4.9 0 0 0 15.74 628.96 Z" fill="#6e6e6e"/>
<circle cx="19.2" cy="625.5" r="4.9" fill="#ffffff"/>
<path d="M32.70 541.20h1.2v1.2h-1.2z M32.70 558.80h1.2v1.2h-1.2z M35.25 541.20h1.2v1.2h-1.2z M35.25 558.80h1.2v1.2h-1.2z M37.81 541.20h1.2v1.2h-1.2z M37.81 558.80h1.2v1.2h-1.2z M40.36 541.20h1.2v1.2h-1.2z M40.36 558.80h1.2v1.2h-1.2z M42.91 541.20h1.2v1.2h-1.2z M42.91 558.80h1.2v1.2h-1.2z M45.47 541.20h1.2v1.2h-1.2z M45.47 558.80h1.2v1.2h-1.2z M48.02 541.20h1.2v1.2h-1.2z M48.02 558.80h1.2v1.2h-1.2z M50.57 541.20h1.2v1.2h-1.2z M50.57 558.80h1.2v1.2h-1.2z M53.13 541.20h1.2v1.2h-1.2z M53.13 558.80h1.2v1.2h-1.2z M55.68 541.20h1.2v1.2h-1.2z M55.68 558.80h1.2v1.2h-1.2z M58.23 541.20h1.2v1.2h-1.2z M58.23 558.80h1.2v1.2h-1.2z M60.79 541.20h1.2v1.2h-1.2z M60.79 558.80h1.2v1.2h-1.2z M63.34 541.20h1.2v1.2h-1.2z M63.34 558.80h1.2v1.2h-1.2z M65.89 541.20h1.2v1.2h-1.2z M65.89 558.80h1.2v1.2h-1.2z M68.45 541.20h1.2v1.2h-1.2z M68.45 558.80h1.2v1.2h-1.2z M71.00 541.20h1.2v1.2h-1.2z M71.00 558.80h1.2v1.2h-1.2z M32.70 543.71h1.2v1.2h-1.2z M71.00 543.71h1.2v1.2h-1.2z M32.70 546.23h1.2v1.2h-1.2z M71.00 546.23h1.2v1.2h-1.2z M32.70 548.74h1.2v1.2h-1.2z M71.00 548.74h1.2v1.2h-1.2z M32.70 551.26h1.2v1.2h-1.2z M71.00 551.26h1.2v1.2h-1.2z M32.70 553.77h1.2v1.2h-1.2z M71.00 553.77h1.2v1.2h-1.2z M32.70 556.29h1.2v1.2h-1.2z M71.00 556.29h1.2v1.2h-1.2z" fill="#111"/>
<rect x="198.3" y="466.7" width="37.19999999999999" height="24.80000000000001" fill="#6a6a6a"/>
<rect x="199.60000000000002" y="468.0" width="34.19999999999999" height="21.50000000000001" fill="#a0a0a0"/>
<rect x="199.60000000000002" y="468.0" width="32.79999999999999" height="20.20000000000001" fill="#ffffff"/>
<rect x="201.3" y="469.7" width="31.099999999999987" height="18.50000000000001" fill="#f0f0f0"/>
<rect x="198.3" y="541.7" width="37.19999999999999" height="24.799999999999955" fill="#6a6a6a"/>
<rect x="199.60000000000002" y="543.0" width="34.19999999999999" height="21.499999999999954" fill="#a0a0a0"/>
<rect x="199.60000000000002" y="543.0" width="32.79999999999999" height="20.199999999999953" fill="#ffffff"/>
<rect x="201.3" y="544.7" width="31.099999999999987" height="18.499999999999954" fill="#f0f0f0"/>
<rect x="212.9" y="477.6" width="7.9" height="1.7" fill="#111"/>
<rect x="215.9" y="474" width="2.3" height="9" fill="#000"/>
<rect x="214.1" y="552.8" width="5.4" height="1.5" fill="#000"/>
<rect x="436" y="467" width="24.30000000000001" height="18.600000000000023" fill="#6a6a6a"/>
<rect x="437.3" y="468.3" width="21.30000000000001" height="15.300000000000022" fill="#a0a0a0"/>
<rect x="437.3" y="468.3" width="19.90000000000001" height="14.000000000000021" fill="#ffffff"/>
<rect x="439" y="470" width="18.20000000000001" height="12.300000000000022" fill="#f0f0f0"/>
<rect x="463.35" y="467" width="24.549999999999955" height="18.600000000000023" fill="#6a6a6a"/>
<rect x="464.65000000000003" y="468.3" width="21.549999999999955" height="15.300000000000022" fill="#a0a0a0"/>
<rect x="464.65000000000003" y="468.3" width="20.149999999999952" height="14.000000000000021" fill="#ffffff"/>
<rect x="466.35" y="470" width="18.449999999999953" height="12.300000000000022" fill="#f0f0f0"/>
<rect x="445.6" y="475.5" width="5.4" height="1.8" fill="#1a1a1a"/>
<rect x="471.75" y="475.3" width="7.6" height="2.0" fill="#1a1a1a"/>
<rect x="474.35" y="471.9" width="2.6" height="8.6" fill="#000"/>
<rect x="436" y="498" width="24.30000000000001" height="18.600000000000023" fill="#6a6a6a"/>
<rect x="437.3" y="499.3" width="21.30000000000001" height="15.300000000000022" fill="#a0a0a0"/>
<rect x="437.3" y="499.3" width="19.90000000000001" height="14.000000000000021" fill="#ffffff"/>
<rect x="439" y="501" width="18.20000000000001" height="12.300000000000022" fill="#f0f0f0"/>
<rect x="463.35" y="498" width="24.549999999999955" height="18.600000000000023" fill="#6a6a6a"/>
<rect x="464.65000000000003" y="499.3" width="21.549999999999955" height="15.300000000000022" fill="#a0a0a0"/>
<rect x="464.65000000000003" y="499.3" width="20.149999999999952" height="14.000000000000021" fill="#ffffff"/>
<rect x="466.35" y="501" width="18.449999999999953" height="12.300000000000022" fill="#f0f0f0"/>
<rect x="445.6" y="506.5" width="5.4" height="1.8" fill="#1a1a1a"/>
<rect x="471.75" y="506.3" width="7.6" height="2.0" fill="#1a1a1a"/>
<rect x="474.35" y="502.9" width="2.6" height="8.6" fill="#000"/>
<rect x="436" y="529" width="24.30000000000001" height="18.600000000000023" fill="#6a6a6a"/>
<rect x="437.3" y="530.3" width="21.30000000000001" height="15.300000000000022" fill="#a0a0a0"/>
<rect x="437.3" y="530.3" width="19.90000000000001" height="14.000000000000021" fill="#ffffff"/>
<rect x="439" y="532" width="18.20000000000001" height="12.300000000000022" fill="#f0f0f0"/>
<rect x="463.35" y="529" width="24.549999999999955" height="18.600000000000023" fill="#6a6a6a"/>
<rect x="464.65000000000003" y="530.3" width="21.549999999999955" height="15.300000000000022" fill="#a0a0a0"/>
<rect x="464.65000000000003" y="530.3" width="20.149999999999952" height="14.000000000000021" fill="#ffffff"/>
<rect x="466.35" y="532" width="18.449999999999953" height="12.300000000000022" fill="#f0f0f0"/>
<rect x="445.6" y="537.5" width="5.4" height="1.8" fill="#1a1a1a"/>
<rect x="471.75" y="537.3" width="7.6" height="2.0" fill="#1a1a1a"/>
<rect x="474.35" y="533.9" width="2.6" height="8.6" fill="#000"/>
<rect x="436" y="560" width="24.30000000000001" height="18.600000000000023" fill="#6a6a6a"/>
<rect x="437.3" y="561.3" width="21.30000000000001" height="15.300000000000022" fill="#a0a0a0"/>
<rect x="437.3" y="561.3" width="19.90000000000001" height="14.000000000000021" fill="#ffffff"/>
<rect x="439" y="563" width="18.20000000000001" height="12.300000000000022" fill="#f0f0f0"/>
<rect x="463.35" y="560" width="24.549999999999955" height="18.600000000000023" fill="#6a6a6a"/>
<rect x="464.65000000000003" y="561.3" width="21.549999999999955" height="15.300000000000022" fill="#a0a0a0"/>
<rect x="464.65000000000003" y="561.3" width="20.149999999999952" height="14.000000000000021" fill="#ffffff"/>
<rect x="466.35" y="563" width="18.449999999999953" height="12.300000000000022" fill="#f0f0f0"/>
<rect x="445.6" y="568.5" width="5.4" height="1.8" fill="#1a1a1a"/>
<rect x="471.75" y="568.3" width="7.6" height="2.0" fill="#1a1a1a"/>
<rect x="474.35" y="564.9" width="2.6" height="8.6" fill="#000"/>
<rect x="436" y="591" width="24.30000000000001" height="18.600000000000023" fill="#6a6a6a"/>
<rect x="437.3" y="592.3" width="21.30000000000001" height="15.300000000000022" fill="#a0a0a0"/>
<rect x="437.3" y="592.3" width="19.90000000000001" height="14.000000000000021" fill="#ffffff"/>
<rect x="439" y="594" width="18.20000000000001" height="12.300000000000022" fill="#f0f0f0"/>
<rect x="463.35" y="591" width="24.549999999999955" height="18.600000000000023" fill="#6a6a6a"/>
<rect x="464.65000000000003" y="592.3" width="21.549999999999955" height="15.300000000000022" fill="#a0a0a0"/>
<rect x="464.65000000000003" y="592.3" width="20.149999999999952" height="14.000000000000021" fill="#ffffff"/>
<rect x="466.35" y="594" width="18.449999999999953" height="12.300000000000022" fill="#f0f0f0"/>
<rect x="445.6" y="599.5" width="5.4" height="1.8" fill="#1a1a1a"/>
<rect x="471.75" y="599.3" width="7.6" height="2.0" fill="#1a1a1a"/>
<rect x="474.35" y="595.9" width="2.6" height="8.6" fill="#000"/>
<rect x="767" y="467" width="25" height="18.600000000000023" fill="#6a6a6a"/>
<rect x="768.3" y="468.3" width="22.0" height="15.300000000000022" fill="#a0a0a0"/>
<rect x="768.3" y="468.3" width="20.599999999999998" height="14.000000000000021" fill="#ffffff"/>
<rect x="770" y="470" width="18.9" height="12.300000000000022" fill="#f0f0f0"/>
<rect x="794.8" y="467" width="24.700000000000045" height="18.600000000000023" fill="#6a6a6a"/>
<rect x="796.0999999999999" y="468.3" width="21.700000000000045" height="15.300000000000022" fill="#a0a0a0"/>
<rect x="796.0999999999999" y="468.3" width="20.300000000000043" height="14.000000000000021" fill="#ffffff"/>
<rect x="797.8" y="470" width="18.600000000000044" height="12.300000000000022" fill="#f0f0f0"/>
<rect x="776.6" y="475.5" width="5.4" height="1.8" fill="#1a1a1a"/>
<rect x="803.1999999999999" y="475.3" width="7.6" height="2.0" fill="#1a1a1a"/>
<rect x="805.8" y="471.9" width="2.6" height="8.6" fill="#000"/>
<rect x="767" y="498" width="25" height="18.600000000000023" fill="#6a6a6a"/>
<rect x="768.3" y="499.3" width="22.0" height="15.300000000000022" fill="#a0a0a0"/>
<rect x="768.3" y="499.3" width="20.599999999999998" height="14.000000000000021" fill="#ffffff"/>
<rect x="770" y="501" width="18.9" height="12.300000000000022" fill="#f0f0f0"/>
<rect x="794.8" y="498" width="24.700000000000045" height="18.600000000000023" fill="#6a6a6a"/>
<rect x="796.0999999999999" y="499.3" width="21.700000000000045" height="15.300000000000022" fill="#a0a0a0"/>
<rect x="796.0999999999999" y="499.3" width="20.300000000000043" height="14.000000000000021" fill="#ffffff"/>
<rect x="797.8" y="501" width="18.600000000000044" height="12.300000000000022" fill="#f0f0f0"/>
<rect x="776.6" y="506.5" width="5.4" height="1.8" fill="#1a1a1a"/>
<rect x="803.1999999999999" y="506.3" width="7.6" height="2.0" fill="#1a1a1a"/>
<rect x="805.8" y="502.9" width="2.6" height="8.6" fill="#000"/>
<rect x="767" y="529" width="25" height="18.600000000000023" fill="#6a6a6a"/>
<rect x="768.3" y="530.3" width="22.0" height="15.300000000000022" fill="#a0a0a0"/>
<rect x="768.3" y="530.3" width="20.599999999999998" height="14.000000000000021" fill="#ffffff"/>
<rect x="770" y="532" width="18.9" height="12.300000000000022" fill="#f0f0f0"/>
<rect x="794.8" y="529" width="24.700000000000045" height="18.600000000000023" fill="#6a6a6a"/>
<rect x="796.0999999999999" y="530.3" width="21.700000000000045" height="15.300000000000022" fill="#a0a0a0"/>
<rect x="796.0999999999999" y="530.3" width="20.300000000000043" height="14.000000000000021" fill="#ffffff"/>
<rect x="797.8" y="532" width="18.600000000000044" height="12.300000000000022" fill="#f0f0f0"/>
<rect x="776.6" y="537.5" width="5.4" height="1.8" fill="#1a1a1a"/>
<rect x="803.1999999999999" y="537.3" width="7.6" height="2.0" fill="#1a1a1a"/>
<rect x="805.8" y="533.9" width="2.6" height="8.6" fill="#000"/>
<rect x="767" y="560" width="25" height="18.600000000000023" fill="#6a6a6a"/>
<rect x="768.3" y="561.3" width="22.0" height="15.300000000000022" fill="#a0a0a0"/>
<rect x="768.3" y="561.3" width="20.599999999999998" height="14.000000000000021" fill="#ffffff"/>
<rect x="770" y="563" width="18.9" height="12.300000000000022" fill="#f0f0f0"/>
<rect x="794.8" y="560" width="24.700000000000045" height="18.600000000000023" fill="#6a6a6a"/>
<rect x="796.0999999999999" y="561.3" width="21.700000000000045" height="15.300000000000022" fill="#a0a0a0"/>
<rect x="796.0999999999999" y="561.3" width="20.300000000000043" height="14.000000000000021" fill="#ffffff"/>
<rect x="797.8" y="563" width="18.600000000000044" height="12.300000000000022" fill="#f0f0f0"/>
<rect x="776.6" y="568.5" width="5.4" height="1.8" fill="#1a1a1a"/>
<rect x="803.1999999999999" y="568.3" width="7.6" height="2.0" fill="#1a1a1a"/>
<rect x="805.8" y="564.9" width="2.6" height="8.6" fill="#000"/>
<rect x="1108.2" y="467" width="24.899999999999864" height="18.600000000000023" fill="#6a6a6a"/>
<rect x="1109.5" y="468.3" width="21.899999999999864" height="15.300000000000022" fill="#a0a0a0"/>
<rect x="1109.5" y="468.3" width="20.49999999999986" height="14.000000000000021" fill="#ffffff"/>
<rect x="1111.2" y="470" width="18.799999999999862" height="12.300000000000022" fill="#f0f0f0"/>
<rect x="1136.1" y="467" width="24.700000000000045" height="18.600000000000023" fill="#6a6a6a"/>
<rect x="1137.3999999999999" y="468.3" width="21.700000000000045" height="15.300000000000022" fill="#a0a0a0"/>
<rect x="1137.3999999999999" y="468.3" width="20.300000000000043" height="14.000000000000021" fill="#ffffff"/>
<rect x="1139.1" y="470" width="18.600000000000044" height="12.300000000000022" fill="#f0f0f0"/>
<rect x="1117.8" y="475.5" width="5.4" height="1.8" fill="#1a1a1a"/>
<rect x="1144.5" y="475.3" width="7.6" height="2.0" fill="#1a1a1a"/>
<rect x="1147.1" y="471.9" width="2.6" height="8.6" fill="#000"/>
<rect x="1108.2" y="498" width="24.899999999999864" height="18.600000000000023" fill="#6a6a6a"/>
<rect x="1109.5" y="499.3" width="21.899999999999864" height="15.300000000000022" fill="#a0a0a0"/>
<rect x="1109.5" y="499.3" width="20.49999999999986" height="14.000000000000021" fill="#ffffff"/>
<rect x="1111.2" y="501" width="18.799999999999862" height="12.300000000000022" fill="#f0f0f0"/>
<rect x="1136.1" y="498" width="24.700000000000045" height="18.600000000000023" fill="#6a6a6a"/>
<rect x="1137.3999999999999" y="499.3" width="21.700000000000045" height="15.300000000000022" fill="#a0a0a0"/>
<rect x="1137.3999999999999" y="499.3" width="20.300000000000043" height="14.000000000000021" fill="#ffffff"/>
<rect x="1139.1" y="501" width="18.600000000000044" height="12.300000000000022" fill="#f0f0f0"/>
<rect x="1117.8" y="506.5" width="5.4" height="1.8" fill="#1a1a1a"/>
<rect x="1144.5" y="506.3" width="7.6" height="2.0" fill="#1a1a1a"/>
<rect x="1147.1" y="502.9" width="2.6" height="8.6" fill="#000"/>
<rect x="1108.2" y="529" width="24.899999999999864" height="18.600000000000023" fill="#6a6a6a"/>
<rect x="1109.5" y="530.3" width="21.899999999999864" height="15.300000000000022" fill="#a0a0a0"/>
<rect x="1109.5" y="530.3" width="20.49999999999986" height="14.000000000000021" fill="#ffffff"/>
<rect x="1111.2" y="532" width="18.799999999999862" height="12.300000000000022" fill="#f0f0f0"/>
<rect x="1136.1" y="529" width="24.700000000000045" height="18.600000000000023" fill="#6a6a6a"/>
<rect x="1137.3999999999999" y="530.3" width="21.700000000000045" height="15.300000000000022" fill="#a0a0a0"/>
<rect x="1137.3999999999999" y="530.3" width="20.300000000000043" height="14.000000000000021" fill="#ffffff"/>
<rect x="1139.1" y="532" width="18.600000000000044" height="12.300000000000022" fill="#f0f0f0"/>
<rect x="1117.8" y="537.5" width="5.4" height="1.8" fill="#1a1a1a"/>
<rect x="1144.5" y="537.3" width="7.6" height="2.0" fill="#1a1a1a"/>
<rect x="1147.1" y="533.9" width="2.6" height="8.6" fill="#000"/>
<rect x="198" y="652" width="62" height="31" fill="#6a6a6a"/>
<rect x="199.3" y="653.3" width="59.0" height="27.7" fill="#a0a0a0"/>
<rect x="199.3" y="653.3" width="57.6" height="26.4" fill="#ffffff"/>
<rect x="201" y="655" width="55.9" height="24.7" fill="#f0f0f0"/>
<rect x="260.5" y="652" width="63.0" height="31" fill="#6a6a6a"/>
<rect x="261.8" y="653.3" width="60.0" height="27.7" fill="#a0a0a0"/>
<rect x="261.8" y="653.3" width="58.6" height="26.4" fill="#ffffff"/>
<rect x="263.5" y="655" width="56.9" height="24.7" fill="#f0f0f0"/>
<rect x="364.2" y="652" width="62.80000000000001" height="31" fill="#6a6a6a"/>
<rect x="365.5" y="653.3" width="59.80000000000001" height="27.7" fill="#a0a0a0"/>
<rect x="365.5" y="653.3" width="58.40000000000001" height="26.4" fill="#ffffff"/>
<rect x="367.2" y="655" width="56.70000000000001" height="24.7" fill="#f0f0f0"/>
<rect x="427" y="652" width="62.5" height="31" fill="#6a6a6a"/>
<rect x="428.3" y="653.3" width="59.5" height="27.7" fill="#a0a0a0"/>
<rect x="428.3" y="653.3" width="58.1" height="26.4" fill="#ffffff"/>
<rect x="430" y="655" width="56.4" height="24.7" fill="#f0f0f0"/>
<g filter="url(#gs)">
<text x="34.00" y="63.00" font-size="17" font-weight="bold" fill="#000" stroke="#e5e5e5" stroke-width="0.15" textLength="58.20" lengthAdjust="spacing" xml:space="preserve">Motor 1</text>
<text x="34.00" y="88.00" font-size="17" font-weight="bold" fill="#000" stroke="#e5e5e5" stroke-width="0.15" textLength="59.00" lengthAdjust="spacing" xml:space="preserve">Motor 2</text>
<text x="34.00" y="113.00" font-size="17" font-weight="bold" fill="#000" stroke="#e5e5e5" stroke-width="0.15" textLength="59.00" lengthAdjust="spacing" xml:space="preserve">Motor 3</text>
<text x="10.20" y="195.00" font-size="17" font-weight="bold" fill="#000" stroke="#e5e5e5" stroke-width="0.15" textLength="67.80" lengthAdjust="spacing" xml:space="preserve">Display:</text>
<text x="36.20" y="219.00" font-size="17" font-weight="bold" fill="#000" stroke="#e5e5e5" stroke-width="0.15" textLength="50.80" lengthAdjust="spacing" xml:space="preserve">Target</text>
<text x="35.20" y="244.00" font-size="17" font-weight="bold" fill="#000" stroke="#e5e5e5" stroke-width="0.15" textLength="78.00" lengthAdjust="spacing" xml:space="preserve">Feedback</text>
<text x="35.20" y="269.00" font-size="17" font-weight="bold" fill="#000" stroke="#e5e5e5" stroke-width="0.15" textLength="44.00" lengthAdjust="spacing" xml:space="preserve">PWM</text>
<text x="35.20" y="294.00" font-size="17" font-weight="bold" fill="#000" stroke="#e5e5e5" stroke-width="0.15" textLength="101.80" lengthAdjust="spacing" xml:space="preserve">Motor Limits</text>
<text x="35.20" y="319.00" font-size="17" font-weight="bold" fill="#000" stroke="#e5e5e5" stroke-width="0.15" textLength="111.80" lengthAdjust="spacing" xml:space="preserve">Input Clipping</text>
<text x="36.80" y="365.20" font-size="17" font-weight="bold" fill="#000" stroke="#f0f0f0" stroke-width="0.15" textLength="95.60" lengthAdjust="spacing" xml:space="preserve">Save Image</text>
<text x="11.00" y="457.60" font-size="17" font-weight="bold" fill="#000" stroke="#e5e5e5" stroke-width="0.15" textLength="82.20" lengthAdjust="spacing" xml:space="preserve">Out Mode:</text>
<text x="34.00" y="481.50" font-size="17" font-weight="bold" fill="#000" stroke="#e5e5e5" stroke-width="0.15" textLength="60.80" lengthAdjust="spacing" xml:space="preserve">Monitor</text>
<text x="34.00" y="506.40" font-size="17" font-weight="bold" fill="#000" stroke="#e5e5e5" stroke-width="0.15" textLength="57.80" lengthAdjust="spacing" xml:space="preserve">Square</text>
<text x="35.00" y="531.00" font-size="17" font-weight="bold" fill="#000" stroke="#e5e5e5" stroke-width="0.15" textLength="65.00" lengthAdjust="spacing" xml:space="preserve">Triangle</text>
<text x="34.00" y="556.00" font-size="17" font-weight="bold" fill="#000" stroke="#e5e5e5" stroke-width="0.15" textLength="35.20" lengthAdjust="spacing" xml:space="preserve">Sine</text>
<text x="34.00" y="581.00" font-size="17" font-weight="bold" fill="#000" stroke="#e5e5e5" stroke-width="0.15" textLength="55.20" lengthAdjust="spacing" xml:space="preserve">Motion</text>
<text x="34.00" y="606.00" font-size="17" font-weight="bold" fill="#000" stroke="#e5e5e5" stroke-width="0.15" textLength="60.80" lengthAdjust="spacing" xml:space="preserve">Manual</text>
<text x="34.00" y="631.00" font-size="17" font-weight="bold" fill="#000" stroke="#e5e5e5" stroke-width="0.15" textLength="119.00" lengthAdjust="spacing" xml:space="preserve">UDP Pass thru</text>
<text x="35.60" y="658.00" font-size="17" font-weight="bold" fill="#000" stroke="#e5e5e5" stroke-width="0.15" textLength="91.20" lengthAdjust="spacing" xml:space="preserve">pks/sec = 0</text>
<text x="198.00" y="507.50" font-size="17" font-weight="bold" fill="#000" stroke="#e5e5e5" stroke-width="0.15" textLength="35.60" lengthAdjust="spacing" xml:space="preserve">Step</text>
<text x="209.00" y="532.50" font-size="17" font-weight="bold" fill="#000" stroke="#e5e5e5" stroke-width="0.15" textLength="4.00" lengthAdjust="spacing" xml:space="preserve">1</text>
<text x="329.00" y="482.70" font-size="17" font-weight="bold" fill="#000" stroke="#e5e5e5" stroke-width="0.15" textLength="58.20" lengthAdjust="spacing" xml:space="preserve">Fpid / 1</text>
<text x="329.00" y="513.70" font-size="17" font-weight="bold" fill="#000" stroke="#e5e5e5" stroke-width="0.15" textLength="72.00" lengthAdjust="spacing" xml:space="preserve">Kp = 400</text>
<text x="329.00" y="544.70" font-size="17" font-weight="bold" fill="#000" stroke="#e5e5e5" stroke-width="0.15" textLength="46.40" lengthAdjust="spacing" xml:space="preserve">Ki = 0</text>
<text x="329.00" y="575.80" font-size="17" font-weight="bold" fill="#000" stroke="#e5e5e5" stroke-width="0.15" textLength="51.00" lengthAdjust="spacing" xml:space="preserve">Kd = 0</text>
<text x="329.00" y="606.90" font-size="17" font-weight="bold" fill="#000" stroke="#e5e5e5" stroke-width="0.15" textLength="49.60" lengthAdjust="spacing" xml:space="preserve">Ks = 1</text>
<text x="210.80" y="672.50" font-size="17" font-weight="bold" fill="#000" stroke="#f0f0f0" stroke-width="0.15" textLength="37.40" lengthAdjust="spacing" xml:space="preserve">Save</text>
<text x="271.00" y="672.50" font-size="17" font-weight="bold" fill="#000" stroke="#f0f0f0" stroke-width="0.15" textLength="41.00" lengthAdjust="spacing" xml:space="preserve">Load</text>
<text x="376.00" y="672.50" font-size="17" font-weight="bold" fill="#000" stroke="#f0f0f0" stroke-width="0.15" textLength="41.80" lengthAdjust="spacing" xml:space="preserve">-&gt; M2</text>
<text x="435.40" y="672.50" font-size="17" font-weight="bold" fill="#000" stroke="#f0f0f0" stroke-width="0.15" textLength="45.00" lengthAdjust="spacing" xml:space="preserve">-&gt; M3</text>
<text x="240.00" y="701.30" font-size="17" font-weight="bold" fill="#000" stroke="#e5e5e5" stroke-width="0.15" textLength="177.00" lengthAdjust="spacing" xml:space="preserve">SMC3 settings loaded</text>
<text x="603.80" y="482.90" font-size="17" font-weight="bold" fill="#000" stroke="#e5e5e5" stroke-width="0.15" textLength="118.20" lengthAdjust="spacing" xml:space="preserve">Fpwm = 25kHz</text>
<text x="603.80" y="513.80" font-size="17" font-weight="bold" fill="#000" stroke="#e5e5e5" stroke-width="0.15" textLength="103.80" lengthAdjust="spacing" xml:space="preserve">PWMmin = 0</text>
<text x="603.80" y="544.80" font-size="17" font-weight="bold" fill="#000" stroke="#e5e5e5" stroke-width="0.15" textLength="109.40" lengthAdjust="spacing" xml:space="preserve">PWMmax = 0</text>
<text x="603.80" y="575.80" font-size="17" font-weight="bold" fill="#000" stroke="#e5e5e5" stroke-width="0.15" textLength="100.20" lengthAdjust="spacing" xml:space="preserve">PWMrev = 0</text>
<text x="605.00" y="638.80" font-size="17" font-weight="bold" fill="#000" stroke="#e5e5e5" stroke-width="0.15" textLength="109.60" lengthAdjust="spacing" xml:space="preserve">Tx: [ A 01 A8 ]</text>
<text x="604.00" y="670.10" font-size="17" font-weight="bold" fill="#000" stroke="#e5e5e5" stroke-width="0.15" textLength="113.60" lengthAdjust="spacing" xml:space="preserve">Rx: [ a 17 00 ]</text>
<text x="604.00" y="701.40" font-size="17" font-weight="bold" fill="#000" stroke="#e5e5e5" stroke-width="0.15" textLength="138.20" lengthAdjust="spacing" xml:space="preserve">Calcs/sec = 3989</text>
<text x="935.40" y="482.50" font-size="17" font-weight="bold" fill="#000" stroke="#e5e5e5" stroke-width="0.15" textLength="139.60" lengthAdjust="spacing" xml:space="preserve">Max Limits = 255</text>
<text x="936.40" y="513.50" font-size="17" font-weight="bold" fill="#000" stroke="#e5e5e5" stroke-width="0.15" textLength="124.80" lengthAdjust="spacing" xml:space="preserve">Clip Input = 255</text>
<text x="935.40" y="544.80" font-size="17" font-weight="bold" fill="#000" stroke="#e5e5e5" stroke-width="0.15" textLength="112.00" lengthAdjust="spacing" xml:space="preserve">Deadzone = 0</text>
<text x="935.40" y="607.80" font-size="17" font-weight="bold" fill="#000" stroke="#e5e5e5" stroke-width="0.15" textLength="185.20" lengthAdjust="spacing" xml:space="preserve">Arduino SMC3 ver 0.70</text>
<text x="936.40" y="638.70" font-size="17" font-weight="bold" fill="#000" stroke="#e5e5e5" stroke-width="0.15" textLength="196.60" lengthAdjust="spacing" xml:space="preserve">Windows Utility ver 1.01</text>
<text x="935.40" y="669.70" font-size="17" font-weight="bold" fill="#000" stroke="#e5e5e5" stroke-width="0.15" textLength="128.80" lengthAdjust="spacing" xml:space="preserve">UDP Port 20017</text>
<text x="936.40" y="701.10" font-size="17" font-weight="bold" fill="#000" stroke="#e5e5e5" stroke-width="0.15" textLength="102.80" lengthAdjust="spacing" xml:space="preserve">Comm Port 6</text>
<text x="126.00" y="61.40" font-size="17" font-weight="bold" fill="#000" stroke="#f0f0f0" stroke-width="0.15" textLength="32.60" lengthAdjust="spacing" xml:space="preserve">OFF</text>
<text x="126.00" y="86.40" font-size="17" font-weight="bold" fill="#000" stroke="#f0f0f0" stroke-width="0.15" textLength="32.60" lengthAdjust="spacing" xml:space="preserve">OFF</text>
<text x="126.00" y="111.40" font-size="17" font-weight="bold" fill="#000" stroke="#f0f0f0" stroke-width="0.15" textLength="32.60" lengthAdjust="spacing" xml:space="preserve">OFF</text>
</g>
</svg></body></html>
